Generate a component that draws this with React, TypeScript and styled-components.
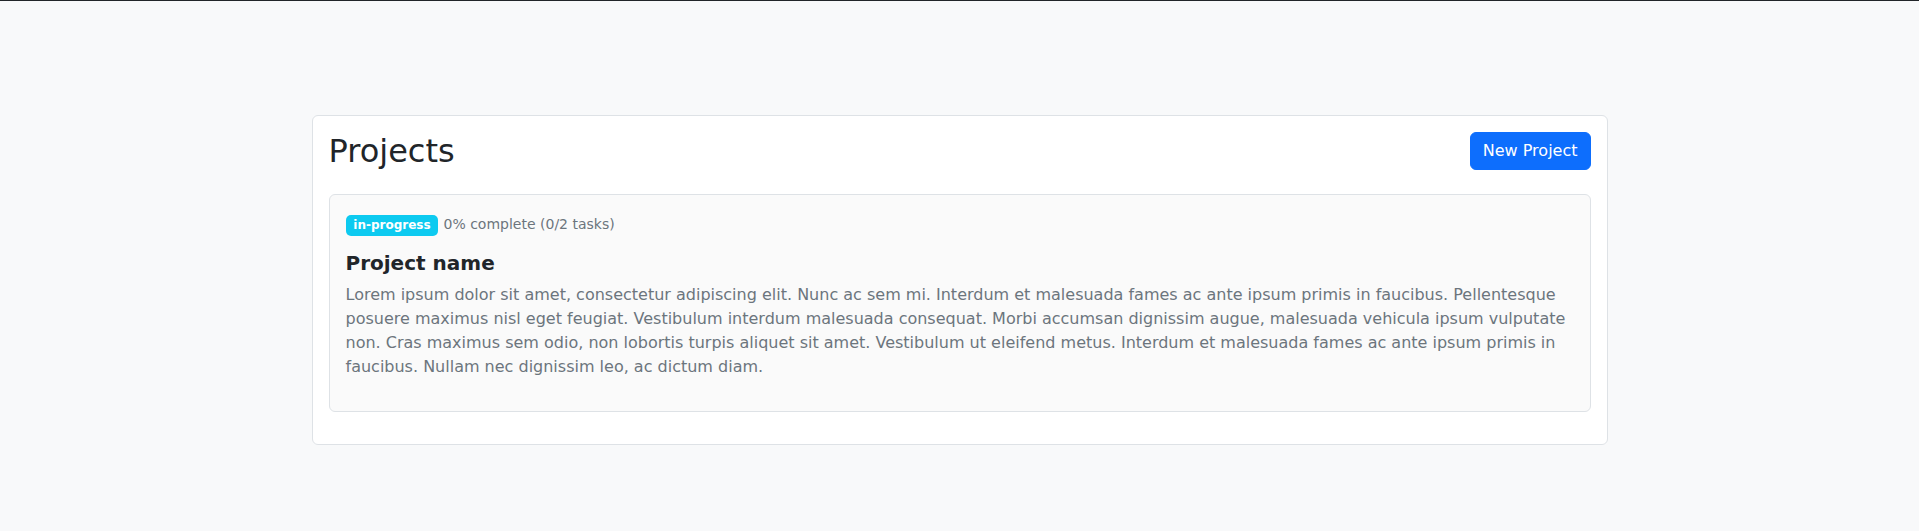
import React from "react";
import styled, { createGlobalStyle } from "styled-components";

const GlobalStyle = createGlobalStyle`
  html, body {
    margin: 0;
    padding: 0;
  }
  body {
    background: #f8f9fa;
    border-top: 1px solid #212529;
    font-family: "DejaVu Sans", sans-serif;
    font-size: 16px;
    line-height: 1.5;
    color: #212529;
  }
  * { box-sizing: border-box; }
`;

const Container = styled.div`
  max-width: 1320px;
  margin: 114px auto 0;
  padding: 0 12px;
`;

const Card = styled.div`
  background: #fff;
  border: 1px solid #dee2e6;
  border-radius: 6px;
  padding: 16px;
`;

const Header = styled.div`
  display: flex;
  justify-content: space-between;
  align-items: center;
  margin-bottom: 24px;
`;

const Title = styled.h2`
  margin: 0;
  font-size: 32px;
  font-weight: 500;
  line-height: 1.2;
`;

const Button = styled.button`
  font-family: inherit;
  font-size: 16px;
  line-height: 1.5;
  padding: 6px 12px;
  border: 1px solid #0d6efd;
  border-radius: 6px;
  background: #0d6efd;
  color: #fff;
  cursor: pointer;
`;

const ProjectCard = styled.div`
  background: #fafafa;
  border: 1px solid #dee2e6;
  border-radius: 6px;
  padding: 16px;
  margin-bottom: 16px;
`;

const Meta = styled.div`
  margin-top: 1px;
  margin-bottom: 15px;
`;

const Badge = styled.span<{ $bg: string }>`
  display: inline-block;
  padding: 0.35em 0.65em;
  font-size: 12px;
  font-weight: 700;
  line-height: 1;
  color: #fff;
  background: ${(p) => p.$bg};
  border-radius: 5px;
  vertical-align: baseline;
  white-space: nowrap;
`;

const Muted = styled.small`
  font-size: 14px;
  color: #6c757d;
`;

const ProjectName = styled.h5`
  margin: 0 0 8px;
  font-size: 20px;
  font-weight: 700;
  line-height: 1.2;
`;

const Description = styled.p`
  margin: 0 0 16px;
  color: #6c757d;
`;

export default function App() {
  return (
    <>
      <GlobalStyle />
      <Container>
        <Card>
          <Header>
            <Title>Projects</Title>
            <Button>New Project</Button>
          </Header>
          <ProjectCard>
            <Meta>
              <Badge $bg="#0dcaf0">in-progress</Badge>{" "}
              <Muted>0% complete (0/2 tasks)</Muted>
            </Meta>
            <ProjectName>Project name</ProjectName>
            <Description>
              Lorem ipsum dolor sit amet, consectetur adipiscing elit. Nunc ac sem mi. Interdum et malesuada fames ac
              ante ipsum primis in faucibus. Pellentesque posuere maximus nisl eget feugiat. Vestibulum interdum
              malesuada consequat. Morbi accumsan dignissim augue, malesuada vehicula ipsum vulputate non. Cras maximus
              sem odio, non lobortis turpis aliquet sit amet. Vestibulum ut eleifend metus. Interdum et malesuada fames
              ac ante ipsum primis in faucibus. Nullam nec dignissim leo, ac dictum diam.
            </Description>
          </ProjectCard>
        </Card>
      </Container>
    </>
  );
}
